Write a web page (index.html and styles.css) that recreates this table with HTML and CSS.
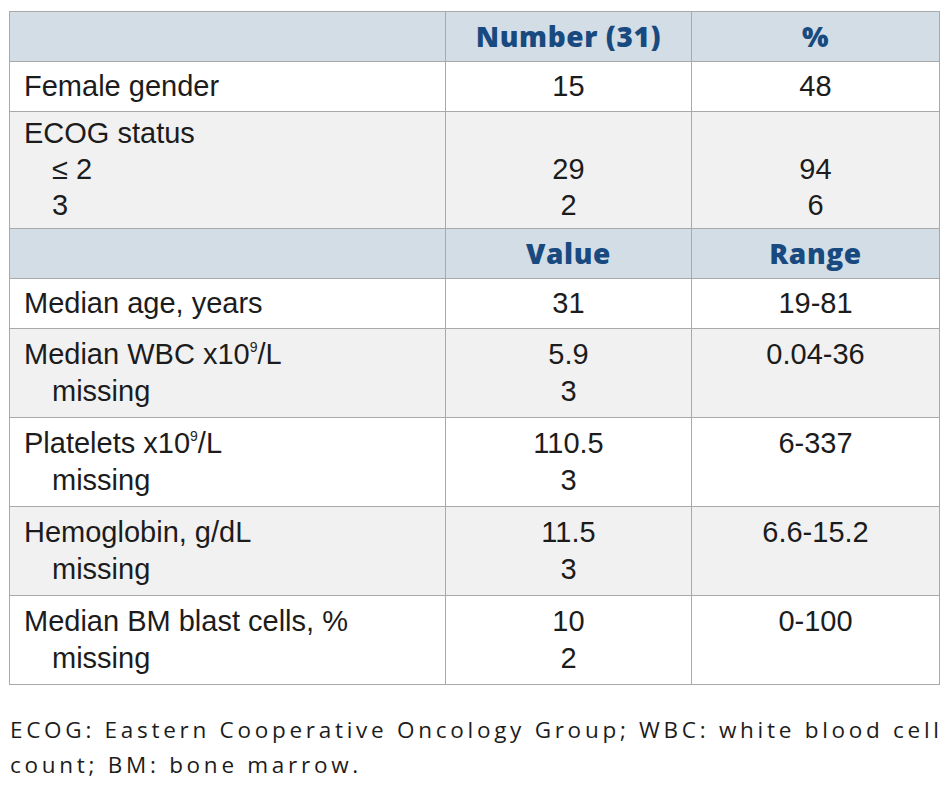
FILE: index.html
```html
<!DOCTYPE html>
<html lang="en">
<head>
<meta charset="utf-8">
<title>Patient characteristics</title>
<link rel="stylesheet" href="styles.css">
</head>
<body>
<div class="page">
  <table class="data">
    <colgroup>
      <col class="c-label">
      <col class="c-num">
      <col class="c-pct">
    </colgroup>
    <tr class="head">
      <th></th>
      <th>Number (31)</th>
      <th>%</th>
    </tr>
    <tr>
      <td class="label">Female gender</td>
      <td>15</td>
      <td>48</td>
    </tr>
    <tr class="alt tight">
      <td class="label">ECOG status<br><span class="ind">≤ 2</span><br><span class="ind">3</span></td>
      <td><br>29<br>2</td>
      <td><br>94<br>6</td>
    </tr>
    <tr class="head">
      <th></th>
      <th>Value</th>
      <th>Range</th>
    </tr>
    <tr>
      <td class="label">Median age, years</td>
      <td>31</td>
      <td>19-81</td>
    </tr>
    <tr class="alt two">
      <td class="label">Median WBC x10<sup>9</sup>/L<br><span class="ind">missing</span></td>
      <td>5.9<br>3</td>
      <td>0.04-36</td>
    </tr>
    <tr class="two">
      <td class="label">Platelets x10<sup>9</sup>/L<br><span class="ind">missing</span></td>
      <td>110.5<br>3</td>
      <td>6-337</td>
    </tr>
    <tr class="alt two">
      <td class="label">Hemoglobin, g/dL<br><span class="ind">missing</span></td>
      <td>11.5<br>3</td>
      <td>6.6-15.2</td>
    </tr>
    <tr class="two">
      <td class="label">Median BM blast cells, %<br><span class="ind">missing</span></td>
      <td>10<br>2</td>
      <td>0-100</td>
    </tr>
  </table>
  <p class="note">ECOG: Eastern Cooperative Oncology Group; WBC: white blood cell<br>count; BM: bone marrow.</p>
</div>
</body>
</html>
```

FILE: styles.css
```css
html, body {
  margin: 0;
  padding: 0;
  background: #ffffff;
}

.page {
  padding: 11px 0 0 9px;
}

.data {
  border-collapse: collapse;
  width: 930px;
  table-layout: fixed;
  font-family: "Liberation Sans", Arial, sans-serif;
  font-size: 29px;
  color: #1c1c1c;
}

.c-label { width: 436px; }
.c-num { width: 246px; }
.c-pct { width: 248px; }

.data th,
.data td {
  border: 1px solid #a9a9a9;
  padding: 6px 14px;
  line-height: 37px;
  text-align: center;
  vertical-align: top;
}

.data td.label {
  text-align: left;
}

.data tr.head th {
  background: #d3dde6;
  font-family: "Open Sans", "DejaVu Sans", sans-serif;
  font-weight: 800;
  font-size: 28px;
  letter-spacing: 0.6px;
  color: #184a80;
  padding: 6px 14px;
}

.data tr.alt td {
  background: #f1f1f1;
}

.data tr.two td {
  padding: 7px 14px;
}

.data tr.tight td {
  line-height: 36px;
  padding: 3px 14px 5px;
}

.ind {
  padding-left: 28px;
}

sup {
  font-size: 14px;
  line-height: 0;
  vertical-align: 12px;
}

.note {
  margin: 27px 0 0 1px;
  font-family: "Open Sans", "DejaVu Sans", sans-serif;
  font-size: 22.5px;
  letter-spacing: 3.72px;
  line-height: 35px;
  color: #1c1c1c;
  white-space: nowrap;
}
```
